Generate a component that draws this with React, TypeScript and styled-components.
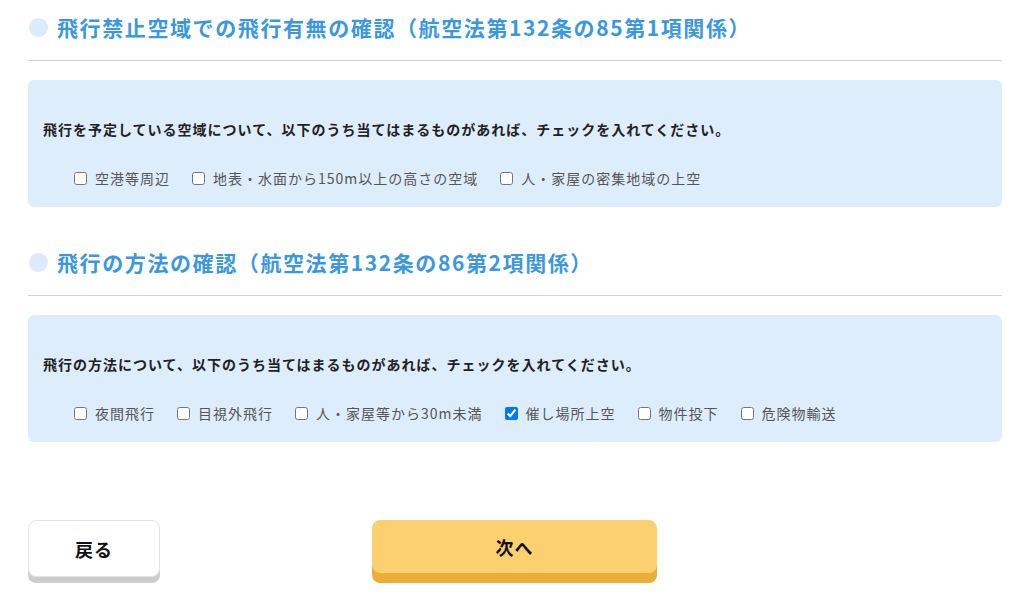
import * as React from 'react'
import styled, { createGlobalStyle } from 'styled-components'

const GlobalStyle = createGlobalStyle`
  body {
    margin: 0;
    background: #fff;
    font-family: "Noto Sans CJK JP", "Noto Sans", sans-serif;
  }
`

const sections = [
  {
    title: '飛行禁止空域での飛行有無の確認（航空法第132条の85第1項関係）',
    lead: '飛行を予定している空域について、以下のうち当てはまるものがあれば、チェックを入れてください。',
    options: [
      { label: '空港等周辺', checked: false },
      { label: '地表・水面から150m以上の高さの空域', checked: false },
      { label: '人・家屋の密集地域の上空', checked: false },
    ],
  },
  {
    title: '飛行の方法の確認（航空法第132条の86第2項関係）',
    lead: '飛行の方法について、以下のうち当てはまるものがあれば、チェックを入れてください。',
    options: [
      { label: '夜間飛行', checked: false },
      { label: '目視外飛行', checked: false },
      { label: '人・家屋等から30m未満', checked: false },
      { label: '催し場所上空', checked: true },
      { label: '物件投下', checked: false },
      { label: '危険物輸送', checked: false },
    ],
  },
]

export default function App() {
  return (
    <>
      <GlobalStyle />
      <Page>
        {sections.map((s, i) => (
          <Section key={i} first={i === 0}>
            <Heading>
              <Dot />
              {s.title}
            </Heading>
            <Panel>
              <Lead>{s.lead}</Lead>
              <Options>
                {s.options.map((o) => (
                  <Option key={o.label}>
                    <input type="checkbox" defaultChecked={o.checked} />
                    {o.label}
                  </Option>
                ))}
              </Options>
            </Panel>
          </Section>
        ))}
        <Buttons>
          <Button variant="back">戻る</Button>
          <Button variant="next">次へ</Button>
        </Buttons>
      </Page>
    </>
  )
}

const Page = styled.div`
  width: 974px;
  margin-left: 28px;
  padding-bottom: 27px;
`

const Section = styled.section<{ first?: boolean }>`
  margin-top: ${(p) => (p.first ? 0 : 28)}px;
`

const Heading = styled.h2`
  display: flex;
  align-items: center;
  gap: 9px;
  margin: 0;
  padding: 12px 0 18px 1px;
  line-height: 30px;
  font-size: 21px;
  font-weight: 700;
  letter-spacing: 1.6px;
  color: #3b98df;
  border-bottom: 1px solid #d2d2d2;
`

const Dot = styled.span`
  width: 19px;
  height: 19px;
  border-radius: 50%;
  background: #dcebfc;
  flex-shrink: 0;
`

const Panel = styled.div`
  margin-top: 19px;
  padding: 39px 15px 19px;
  background: #deedfc;
  border-radius: 6px;
`

const Lead = styled.p`
  margin: 0;
  line-height: 20px;
  font-size: 14px;
  font-weight: 700;
  letter-spacing: 1px;
  color: #222;
`

const Options = styled.div`
  display: flex;
  gap: 22px;
  margin-top: 29px;
  padding-left: 31px;
`

const Option = styled.label`
  display: flex;
  align-items: center;
  gap: 8px;
  line-height: 20px;
  font-size: 14px;
  letter-spacing: 1px;
  color: #555;

  input {
    width: 13px;
    height: 13px;
    margin: 0;
  }
`

const Buttons = styled.div`
  display: flex;
  gap: 212px;
  margin-top: 78px;
`

const Button = styled.button<{ variant: 'back' | 'next' }>`
  height: ${(p) => (p.variant === 'back' ? 57 : 53)}px;
  width: ${(p) => (p.variant === 'back' ? 132 : 285)}px;
  border-radius: 8px;
  font-family: inherit;
  font-size: 18px;
  font-weight: 700;
  letter-spacing: 1px;
  color: #111;
  cursor: pointer;
  border: 1px solid ${(p) => (p.variant === 'back' ? '#e4e4e4' : '#fcd06e')};
  background: ${(p) => (p.variant === 'back' ? '#fff' : '#fdd06f')};
  box-shadow: ${(p) =>
    p.variant === 'back' ? '0 6px 0 #cdcdcd' : '0 10px 0 #eaae3a'};
`
